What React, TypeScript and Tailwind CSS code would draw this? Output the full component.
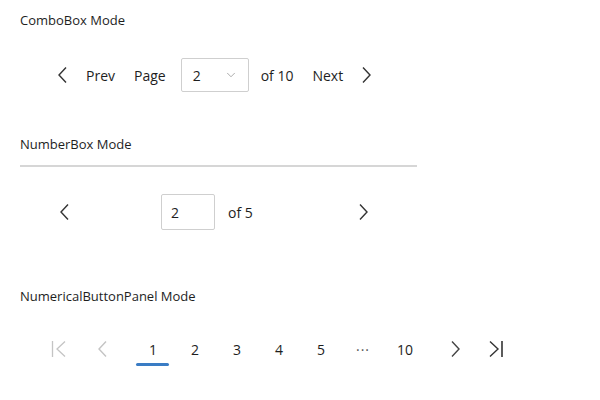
import { ChevronDown } from 'lucide-react'

const font = { fontFamily: '"Open Sans", "Noto Sans", sans-serif' }

function Chevron({ dir, className = '' }: { dir: 'left' | 'right'; className?: string }) {
  return (
    <svg width="12" height="18" viewBox="0 0 12 18" className={className}>
      {dir === 'left' ? (
        <path d="M9 1.5 L2 9 L9 16.5" fill="none" stroke="currentColor" strokeWidth="1.4" />
      ) : (
        <path d="M3 1.5 L10 9 L3 16.5" fill="none" stroke="currentColor" strokeWidth="1.4" />
      )}
    </svg>
  )
}

function FirstIcon() {
  return (
    <svg width="16" height="18" viewBox="0 0 16 18">
      <path d="M1.5 1 V17" stroke="currentColor" strokeWidth="1.3" />
      <path d="M14 1.5 L6 9 L14 16.5" fill="none" stroke="currentColor" strokeWidth="1.3" />
    </svg>
  )
}

function LastIcon() {
  return (
    <svg width="16" height="18" viewBox="0 0 16 18">
      <path d="M2 1.5 L10 9 L2 16.5" fill="none" stroke="currentColor" strokeWidth="1.4" />
      <path d="M14 1 V17" stroke="currentColor" strokeWidth="1.6" />
    </svg>
  )
}

export default function App() {
  const pages = ['1', '2', '3', '4', '5', '···', '10']

  return (
    <div className="w-[600px] h-[400px] bg-white text-[#1e1e1e] flex flex-col" style={font}>
      <div className="pl-5 pt-[11px] text-[13px] leading-[18px]">ComboBox Mode</div>

      {/* combobox mode */}
      <div className="flex items-center h-[34px] mt-[29px] pl-[52px] text-[14px]">
        <span className="w-[22px] flex justify-center text-[#333]">
          <Chevron dir="left" />
        </span>
        <span className="ml-[12px]">Prev</span>
        <span className="ml-[19px]">Page</span>
        <div className="ml-[15px] w-[68px] h-[34px] border border-[#cfcfcf] rounded-[2px] flex items-center pl-[11px] pr-[10px]">
          <span className="flex-1">2</span>
          <ChevronDown size={14} strokeWidth={1.2} className="text-[#888]" />
        </div>
        <span className="ml-[12px]">of 10</span>
        <span className="ml-[19px]">Next</span>
        <span className="ml-[15px] w-[16px] flex justify-center text-[#333]">
          <Chevron dir="right" />
        </span>
      </div>

      <div className="pl-5 mt-[43px] text-[13px] leading-[18px]">NumberBox Mode</div>
      <div className="ml-5 w-[397px] h-[2px] bg-[#d6d6d6] mt-[12px]" />

      {/* numberbox mode */}
      <div className="flex items-center h-[36px] mt-[27px] pl-[56px] text-[14px]">
        <span className="w-[18px] flex justify-center text-[#333]">
          <Chevron dir="left" />
        </span>
        <div className="ml-[87px] w-[54px] h-[36px] border border-[#cfcfcf] rounded-[2px] flex items-center pl-[9px]">
          2
        </div>
        <span className="ml-[13px]">of 5</span>
        <span className="ml-[103px] w-[14px] flex justify-center text-[#333]">
          <Chevron dir="right" />
        </span>
      </div>

      <div className="pl-5 mt-[57px] text-[13px] leading-[18px]">NumericalButtonPanel Mode</div>

      {/* numerical button panel */}
      <div className="flex items-center h-[34px] mt-[27px] pl-[45px] text-[14px]">
        <span className="w-[28px] flex justify-center text-[#c4c4c4]">
          <FirstIcon />
        </span>
        <span className="ml-[16px] w-[28px] flex justify-center text-[#c4c4c4]">
          <Chevron dir="left" />
        </span>
        <div className="ml-[15px] flex">
          {pages.map((p, i) => (
            <div key={i} className="w-[42px] h-[34px] relative flex items-center justify-center">
              <span className={p === '···' ? 'text-[#555] tracking-[1px]' : ''}>{p}</span>
              {i === 0 && (
                <div className="absolute left-[4px] right-[5px] bottom-[0px] h-[3px] rounded-full bg-[#3a7cc4]" />
              )}
            </div>
          ))}
        </div>
        <span className="ml-[15px] w-[28px] flex justify-center text-[#444]">
          <Chevron dir="right" />
        </span>
        <span className="ml-[13px] w-[28px] flex justify-center text-[#333]">
          <LastIcon />
        </span>
      </div>
    </div>
  )
}
